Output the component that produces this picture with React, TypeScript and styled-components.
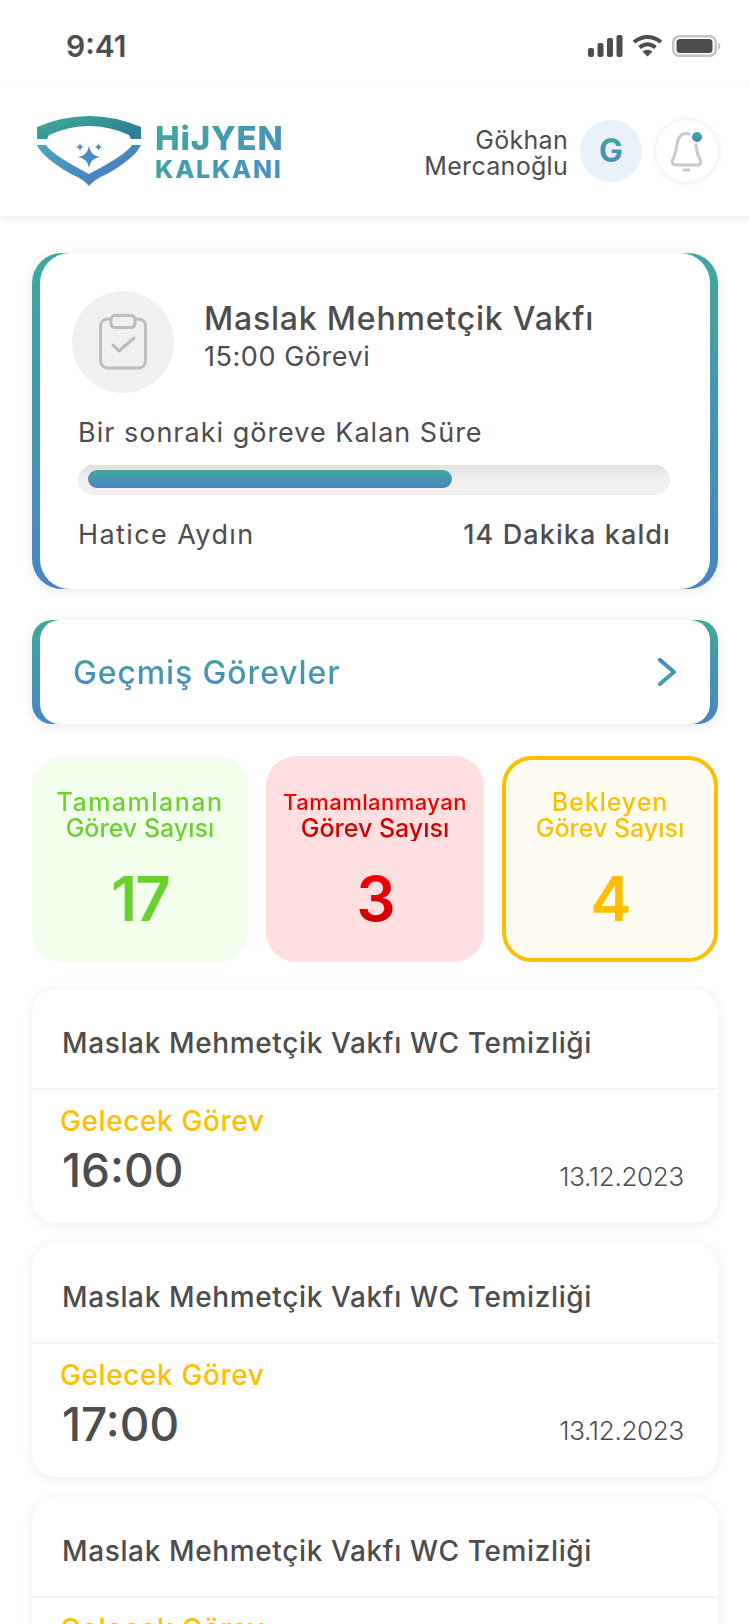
import React from 'react'
import styled, { createGlobalStyle } from 'styled-components'

const GlobalStyle = createGlobalStyle`
  html, body {
    margin: 0;
    background: #fff;
  }
  * {
    box-sizing: border-box;
  }
`

const brandGradient = 'linear-gradient(180deg, #3fa99c 0%, #4a84c4 100%)'
const redGradient = 'linear-gradient(180deg, #ff0000 0%, #c00000 100%)'

const Page = styled.div`
  width: 750px;
  height: 1624px;
  overflow: hidden;
  background: #fff;
  color: #4d4d4d;
  font-family: Inter, "Noto Sans", sans-serif;
`

const TopArea = styled.header`
  background: #fff;
  box-shadow: 0 2px 8px rgba(0, 0, 0, 0.09);
`

const StatusBar = styled.div`
  display: flex;
  align-items: center;
  justify-content: space-between;
  height: 87px;
  padding: 0 29px 0 66px;
  border-bottom: 1px solid #fbfbfb;
`

const Clock = styled.span`
  font-size: 30px;
  font-weight: 600;
  line-height: 36px;
  margin-top: 5px;
`

const StatusIcons = styled.div`
  display: flex;
  align-items: center;
  gap: 9px;
  margin-top: 5px;
`

const Navbar = styled.div`
  display: flex;
  align-items: center;
  justify-content: space-between;
  height: 129px;
  padding: 0 32px 1px 37px;
`

const Logo = styled.div`
  display: flex;
  align-items: center;
  gap: 13px;
`

const LogoText = styled.div`
  display: flex;
  flex-direction: column;
  gap: 4px;
  margin-top: 2px;
  background: linear-gradient(135deg, #3fa99c 0%, #4a8cc4 100%);
  -webkit-background-clip: text;
  background-clip: text;
  color: transparent;
  font-weight: 800;
`

const LogoTop = styled.span`
  font-size: 33px;
  line-height: 30px;
  letter-spacing: 0.8px;
`

const LogoBottom = styled.span`
  font-size: 25px;
  line-height: 24px;
  letter-spacing: 1.7px;
`

const UserBlock = styled.div`
  display: flex;
  align-items: center;
`

const UserName = styled.div`
  font-size: 25px;
  line-height: 26px;
  letter-spacing: 0.3px;
  text-align: right;
  margin: 3px 12px 0 0;
`

const Avatar = styled.div`
  display: flex;
  align-items: center;
  justify-content: center;
  width: 62px;
  height: 62px;
  border-radius: 50%;
  background: #e8f0f8;
  margin-right: 14px;
`

const AvatarLetter = styled.span`
  background: ${brandGradient};
  -webkit-background-clip: text;
  background-clip: text;
  color: transparent;
  font-size: 32px;
  font-weight: 700;
  line-height: 38px;
`

const BellButton = styled.div`
  position: relative;
  width: 62px;
  height: 62px;
  border-radius: 50%;
  background: #fff;
  box-shadow: 0 0 6px rgba(0, 0, 0, 0.1);
`

const BellDot = styled.span`
  position: absolute;
  top: 12px;
  right: 16px;
  width: 10px;
  height: 10px;
  border-radius: 50%;
  background: ${brandGradient};
`

const Content = styled.main`
  display: flex;
  flex-direction: column;
  padding: 37px 32px 0;
`

const GradientCard = styled.section<{ $radius: number; $top: number }>`
  margin-top: ${p => p.$top}px;
  padding: 0 8px;
  border-radius: ${p => p.$radius}px;
  background: ${brandGradient};
  box-shadow: 0 2px 12px rgba(0, 0, 0, 0.09);
`

const CardInner = styled.div<{ $radius: number }>`
  background: #fff;
  border-radius: ${p => p.$radius}px;
`

const CurrentBody = styled.div`
  height: 336px;
  padding: 38px 40px 0 32px;
`

const CurrentHead = styled.div`
  display: flex;
  align-items: center;
  gap: 30px;
`

const TaskIcon = styled.div`
  display: flex;
  align-items: center;
  justify-content: center;
  width: 102px;
  height: 102px;
  border-radius: 50%;
  background: #f0f0f0;
`

const CurrentText = styled.div`
  padding-bottom: 9px;
`

const CurrentTitle = styled.h2`
  margin: 0;
  font-size: 32px;
  font-weight: 500;
  line-height: 38px;
  letter-spacing: 0.8px;
`

const CurrentSub = styled.div`
  font-size: 27px;
  line-height: 38px;
  letter-spacing: 0.55px;
`

const ProgressArea = styled.div`
  padding-left: 6px;
`

const ProgressLabel = styled.div`
  margin-top: 22px;
  font-size: 27px;
  line-height: 36px;
  letter-spacing: 1px;
`

const Track = styled.div`
  height: 30px;
  margin-top: 14px;
  padding: 5px 10px;
  border-radius: 15px;
  background: linear-gradient(180deg, #e0e0e0 0%, #f0f0f0 45%);
`

const Fill = styled.div`
  height: 18px;
  border-radius: 9px;
  background: ${brandGradient};
`

const ProgressFoot = styled.div`
  display: flex;
  justify-content: space-between;
  margin-top: 22px;
  font-size: 27px;
  line-height: 36px;
`

const Assignee = styled.span`
  letter-spacing: 1.4px;
`

const Remaining = styled.span`
  font-weight: 500;
  letter-spacing: 1.1px;
  margin-right: -1px;
`

const HistoryRow = styled.div`
  display: flex;
  align-items: center;
  justify-content: space-between;
  height: 104px;
  padding: 0 34px 0 33px;
`

const HistoryTitle = styled.span`
  background: ${brandGradient};
  -webkit-background-clip: text;
  background-clip: text;
  color: transparent;
  font-size: 32px;
  font-weight: 500;
  line-height: 42px;
  letter-spacing: 0.87px;
  margin-top: 2px;
`

const Stats = styled.div`
  display: grid;
  grid-template-columns: 216px 218px 216px;
  gap: 18px;
  height: 206px;
  margin-top: 32px;
`

const StatCard = styled.div<{ $bg: string; $border?: string }>`
  display: flex;
  flex-direction: column;
  align-items: center;
  padding-top: ${p => (p.$border ? '29px' : '33px')};
  border-radius: 30px;
  background: ${p => p.$bg};
  border: ${p => (p.$border ? `4px solid ${p.$border}` : 'none')};
`

const StatLabel = styled.div<{ $color: string }>`
  height: 52px;
  background: ${p => p.$color};
  -webkit-background-clip: text;
  background-clip: text;
  color: transparent;
  font-weight: 500;
  line-height: 26px;
  text-align: center;
`

const StatLine = styled.span<{ $size: number; $spacing: number }>`
  display: block;
  font-size: ${p => p.$size}px;
  letter-spacing: ${p => p.$spacing}px;
  white-space: nowrap;
`

const StatValue = styled.div<{ $color: string }>`
  margin-top: 25px;
  background: ${p => p.$color};
  -webkit-background-clip: text;
  background-clip: text;
  color: transparent;
  font-size: 62px;
  font-weight: 600;
  line-height: 66px;
  letter-spacing: -2px;
`

const TaskList = styled.div`
  display: flex;
  flex-direction: column;
  gap: 20px;
  margin-top: 27px;
`

const TaskCard = styled.article`
  flex: none;
  height: 234px;
  border-radius: 24px;
  background: #fff;
  box-shadow: 0 2px 12px rgba(0, 0, 0, 0.08);
`

const TaskHead = styled.div`
  display: flex;
  align-items: center;
  height: 101px;
  padding: 8px 30px 0;
  border-bottom: 2px solid #f2f2f2;
  font-size: 28px;
  font-weight: 500;
  letter-spacing: 0.63px;
`

const TaskBody = styled.div`
  padding: 14px 34px 0 28px;
`

const TaskStatus = styled.div`
  color: #ffbf00;
  font-size: 28px;
  font-weight: 500;
  line-height: 34px;
  letter-spacing: 0.6px;
`

const TaskFoot = styled.div`
  display: flex;
  align-items: flex-end;
  justify-content: space-between;
  margin-top: 3px;
  padding-left: 2px;
`

const TaskTime = styled.span`
  font-size: 46px;
  font-weight: 500;
  line-height: 58px;
`

const TaskDate = styled.span`
  font-size: 26px;
  font-weight: 300;
  line-height: 36px;
  letter-spacing: -0.3px;
  margin-bottom: 4px;
`

function SignalIcon() {
  return (
    <svg width="35" height="22" viewBox="0 0 35 22" fill="#4d4d4d">
      <rect x="0" y="13" width="6" height="9" rx="2" />
      <rect x="9.5" y="8" width="6" height="14" rx="2" />
      <rect x="19" y="3" width="6" height="19" rx="2" />
      <rect x="28.5" y="0" width="6" height="22" rx="2" />
    </svg>
  )
}

function WifiIcon() {
  return (
    <svg width="31" height="23" viewBox="0 0 31 23" fill="none" stroke="#4d4d4d" strokeWidth="4">
      <path d="M2 8 Q15.5 -2 29 8" />
      <path d="M7.5 13.5 Q15.5 7 23.5 13.5" />
      <path d="M15.5 22.5 L10.5 17.5 Q15.5 14 20.5 17.5 Z" fill="#4d4d4d" stroke="none" />
    </svg>
  )
}

function BatteryIcon() {
  return (
    <svg width="49" height="22" viewBox="0 0 49 22">
      <rect x="1.25" y="1.25" width="42.5" height="19.5" rx="6" fill="none" stroke="#c4c4c4" strokeWidth="2.5" />
      <rect x="4.5" y="4" width="36" height="14" rx="3.5" fill="#4d4d4d" />
      <path d="M46 7.5 Q48.5 9 48.5 11 Q48.5 13 46 14.5 Z" fill="#c4c4c4" />
    </svg>
  )
}

function ShieldLogo() {
  return (
    <svg width="105" height="71" viewBox="0 0 105 71">
      <defs>
        <linearGradient id="shieldTop" x1="0" y1="0" x2="1" y2="0.6">
          <stop offset="0" stopColor="#3fae9a" />
          <stop offset="1" stopColor="#2f7f96" />
        </linearGradient>
        <linearGradient id="shieldBottom" x1="0" y1="0" x2="1" y2="0.7">
          <stop offset="0" stopColor="#4aa6bb" />
          <stop offset="1" stopColor="#4a78c4" />
        </linearGradient>
      </defs>
      <path d="M0 11 Q52 -11 104 11 V23 H94 L92 19 Q52 1 12 19 L10 23 H0 Z" fill="url(#shieldTop)" />
      <path
        d="M0 29 H9 Q14 38 52 58 Q90 38 95 29 H104 Q98 42 70 58 Q58 63 52 70 Q46 63 34 58 Q6 42 0 29 Z"
        fill="url(#shieldBottom)"
      />
      <path d="M52 30 Q53.5 39.5 63 41 Q53.5 42.5 52 52 Q50.5 42.5 41 41 Q50.5 39.5 52 30 Z" fill="#4a8cc0" />
      <path d="M43 27 Q43.5 30.5 47 31 Q43.5 31.5 43 35 Q42.5 31.5 39 31 Q42.5 30.5 43 27 Z" fill="#4a8cc0" />
      <path d="M61.5 27 Q62 30.5 65.5 31 Q62 31.5 61.5 35 Q61 31.5 57.5 31 Q61 30.5 61.5 27 Z" fill="#4a8cc0" />
    </svg>
  )
}

function BellIcon() {
  return (
    <svg width="62" height="62" viewBox="0 0 62 62" fill="none" stroke="#c9c9c9" strokeWidth="3" strokeLinecap="round">
      <path d="M33 14 C26 12 22 17 21 24 C20 31 19 36 17 39 C15 43 17 45 20 45 H41 C44 45 46 43 44 39 C42 36 41 33 40 25" />
      <path d="M28 50 H33" />
    </svg>
  )
}

function ClipboardIcon() {
  return (
    <svg width="48" height="56" viewBox="0 0 48 56" fill="none" stroke="#bdbdbd" strokeWidth="3" strokeLinecap="round" strokeLinejoin="round">
      <rect x="1.5" y="5" width="45" height="49" rx="7" />
      <rect x="12" y="1.5" width="24" height="12" rx="4" fill="#f0f0f0" />
      <path d="M14 31 L20 37 L35 24" />
    </svg>
  )
}

function ChevronIcon() {
  return (
    <svg width="18" height="28" viewBox="0 0 18 28" fill="none" strokeWidth="4" strokeLinecap="round" strokeLinejoin="round">
      <defs>
        <linearGradient id="chevronStroke" x1="0" y1="0" x2="0" y2="1">
          <stop offset="0" stopColor="#4a84c4" />
          <stop offset="1" stopColor="#3fa99c" />
        </linearGradient>
      </defs>
      <path d="M2 2 L16 14 L2 26" stroke="url(#chevronStroke)" />
    </svg>
  )
}

const tasks = [
  { id: 1, time: '16:00' },
  { id: 2, time: '17:00' },
  { id: 3, time: '18:00' },
]

export default function App() {
  return (
    <Page>
      <GlobalStyle />
      <TopArea>
        <StatusBar>
          <Clock>9:41</Clock>
          <StatusIcons>
            <SignalIcon />
            <WifiIcon />
            <BatteryIcon />
          </StatusIcons>
        </StatusBar>
        <Navbar>
          <Logo>
            <ShieldLogo />
            <LogoText>
              <LogoTop>HiJYEN</LogoTop>
              <LogoBottom>KALKANI</LogoBottom>
            </LogoText>
          </Logo>
          <UserBlock>
            <UserName>
              Gökhan
              <br />
              Mercanoğlu
            </UserName>
            <Avatar>
              <AvatarLetter>G</AvatarLetter>
            </Avatar>
            <BellButton>
              <BellIcon />
              <BellDot />
            </BellButton>
          </UserBlock>
        </Navbar>
      </TopArea>
      <Content>
        <GradientCard $radius={30} $top={0}>
          <CardInner $radius={30}>
            <CurrentBody>
              <CurrentHead>
                <TaskIcon>
                  <ClipboardIcon />
                </TaskIcon>
                <CurrentText>
                  <CurrentTitle>Maslak Mehmetçik Vakfı</CurrentTitle>
                  <CurrentSub>15:00 Görevi</CurrentSub>
                </CurrentText>
              </CurrentHead>
              <ProgressArea>
                <ProgressLabel>Bir sonraki göreve Kalan Süre</ProgressLabel>
                <Track>
                  <Fill style={{ width: 364 }} />
                </Track>
                <ProgressFoot>
                  <Assignee>Hatice Aydın</Assignee>
                  <Remaining>14 Dakika kaldı</Remaining>
                </ProgressFoot>
              </ProgressArea>
            </CurrentBody>
          </CardInner>
        </GradientCard>
        <GradientCard $radius={20} $top={31}>
          <CardInner $radius={20}>
            <HistoryRow>
              <HistoryTitle>Geçmiş Görevler</HistoryTitle>
              <ChevronIcon />
            </HistoryRow>
          </CardInner>
        </GradientCard>
        <Stats>
          <StatCard $bg="#f2ffec">
            <StatLabel $color="#6bd02c">
              <StatLine $size={25} $spacing={1.5}>Tamamlanan</StatLine>
              <StatLine $size={25} $spacing={0}>Görev Sayısı</StatLine>
            </StatLabel>
            <StatValue $color="#6bd02c">17</StatValue>
          </StatCard>
          <StatCard $bg="#ffdfe0">
            <StatLabel $color={redGradient}>
              <StatLine $size={22} $spacing={0.45}>Tamamlanmayan</StatLine>
              <StatLine $size={25} $spacing={0}>Görev Sayısı</StatLine>
            </StatLabel>
            <StatValue $color={redGradient}>3</StatValue>
          </StatCard>
          <StatCard $bg="#fffdf1" $border="#ffbf00">
            <StatLabel $color="#ffbf00">
              <StatLine $size={25} $spacing={0.9}>Bekleyen</StatLine>
              <StatLine $size={25} $spacing={0}>Görev Sayısı</StatLine>
            </StatLabel>
            <StatValue $color="#ffbf00">4</StatValue>
          </StatCard>
        </Stats>
        <TaskList>
          {tasks.map(task => (
            <TaskCard key={task.id}>
              <TaskHead>Maslak Mehmetçik Vakfı WC Temizliği</TaskHead>
              <TaskBody>
                <TaskStatus>Gelecek Görev</TaskStatus>
                <TaskFoot>
                  <TaskTime>{task.time}</TaskTime>
                  <TaskDate>13.12.2023</TaskDate>
                </TaskFoot>
              </TaskBody>
            </TaskCard>
          ))}
        </TaskList>
      </Content>
    </Page>
  )
}
